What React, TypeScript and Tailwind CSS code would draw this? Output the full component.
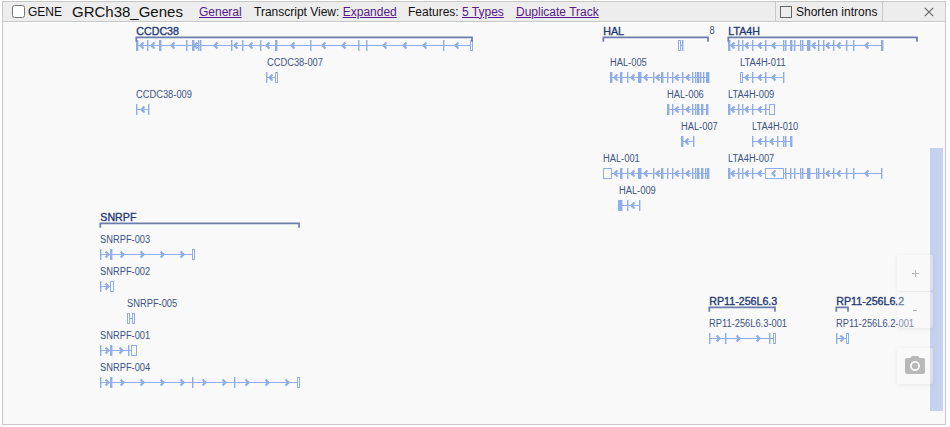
type Gene = { name: string; x: number; y: number; end: number };
type Transcript = {
  name?: string;
  labelX?: number;
  y: number;
  dir: 1 | -1;
  span: [number, number];
  exons: [number, number][];
  boxes?: [number, number][];
  arrows: number[];
};

const GENES: Gene[] = [
  { name: 'CCDC38', x: 136, y: 37, end: 472 },
  { name: 'HAL', x: 603, y: 37, end: 708 },
  { name: 'LTA4H', x: 728, y: 37, end: 917 },
  { name: 'SNRPF', x: 100, y: 223, end: 299 },
  { name: 'RP11-256L6.3', x: 709, y: 307, end: 775 },
  { name: 'RP11-256L6.2', x: 836, y: 307, end: 848 },
];

const TRANSCRIPTS: Transcript[] = [
  { y: 45, dir: -1, span: [136, 472], exons: [[136, 2], [147, 1], [159, 2], [186, 1], [192, 2], [198, 1], [200, 1], [231, 1], [242, 1], [260, 1], [275, 2], [310, 1], [358, 1], [366, 1], [443, 1]], boxes: [[470, 3]], arrows: [142, 153, 173, 196, 216, 236, 251, 268, 293, 324, 344, 385, 405, 425, 457] },
  { name: 'CCDC38-007', labelX: 267, y: 77, dir: -1, span: [267, 277], exons: [[266, 1]], boxes: [[275, 3]], arrows: [271] },
  { name: 'CCDC38-009', labelX: 136, y: 109, dir: -1, span: [136, 149], exons: [[136, 1], [148, 1]], arrows: [143] },
  { y: 45, dir: -1, span: [678, 683], exons: [[682, 1]], boxes: [[678, 3]], arrows: [] },
  { name: 'HAL-005', labelX: 610, y: 77, dir: -1, span: [610, 709], exons: [[610, 2], [620, 2], [627, 1], [638, 3], [653, 1], [661, 2], [667, 1], [672, 1], [682, 1], [692, 1], [695, 1], [697, 2], [700, 1], [703, 1], [706, 3]], arrows: [616, 633, 646, 658, 677, 688] },
  { name: 'HAL-006', labelX: 667, y: 109, dir: -1, span: [667, 707], exons: [[667, 2], [672, 1], [682, 1], [692, 1], [695, 1], [697, 2], [701, 2], [706, 2]], arrows: [677, 688] },
  { name: 'HAL-007', labelX: 681, y: 141, dir: -1, span: [682, 693], exons: [[681, 2], [693, 1]], arrows: [687] },
  { name: 'HAL-001', labelX: 603, y: 173, dir: -1, span: [611, 709], exons: [[620, 2], [627, 1], [638, 3], [653, 1], [661, 2], [667, 1], [672, 1], [682, 1], [692, 1], [695, 1], [697, 2], [701, 2], [705, 1], [707, 2]], boxes: [[603, 9]], arrows: [616, 633, 646, 658, 677, 688] },
  { name: 'HAL-009', labelX: 619, y: 205, dir: -1, span: [622, 640], exons: [[618, 4], [627, 1], [639, 1]], arrows: [633] },
  { y: 45, dir: -1, span: [728, 882], exons: [[728, 2], [738, 1], [742, 1], [752, 1], [765, 1], [783, 1], [785, 1], [790, 2], [794, 1], [800, 1], [802, 1], [807, 3], [818, 1], [823, 1], [833, 1], [846, 1], [853, 1], [881, 2]], arrows: [733, 747, 760, 774, 814, 828, 839, 867] },
  { name: 'LTA4H-011', labelX: 740, y: 77, dir: -1, span: [743, 783], exons: [[752, 1], [765, 1], [783, 1]], boxes: [[740, 3]], arrows: [747, 760, 774] },
  { name: 'LTA4H-009', labelX: 728, y: 109, dir: -1, span: [728, 769], exons: [[728, 2], [738, 1], [742, 1], [752, 1], [765, 1]], boxes: [[769, 6]], arrows: [733, 747, 760] },
  { name: 'LTA4H-010', labelX: 752, y: 141, dir: -1, span: [752, 792], exons: [[752, 1], [765, 1], [777, 1], [783, 1], [785, 1], [790, 2]], arrows: [760, 772] },
  { name: 'LTA4H-007', labelX: 728, y: 173, dir: -1, span: [728, 882], exons: [[728, 2], [738, 1], [742, 1], [752, 1], [785, 1], [790, 1], [794, 1], [800, 1], [802, 1], [807, 3], [816, 1], [818, 1], [823, 1], [833, 1], [846, 1], [853, 1], [881, 1]], boxes: [[765, 19]], arrows: [733, 747, 760, 774, 828, 839, 867] },
  { name: 'SNRPF-003', labelX: 100, y: 254, dir: 1, span: [101, 194], exons: [[100, 1], [110, 2]], boxes: [[192, 3]], arrows: [107, 122, 142, 162, 182] },
  { name: 'SNRPF-002', labelX: 100, y: 286, dir: 1, span: [101, 110], exons: [[100, 1]], boxes: [[110, 4]], arrows: [107] },
  { name: 'SNRPF-005', labelX: 127, y: 318, dir: 1, span: [128, 134], exons: [], boxes: [[127, 3], [132, 3]], arrows: [] },
  { name: 'SNRPF-001', labelX: 100, y: 350, dir: 1, span: [101, 131], exons: [[100, 1], [110, 2], [128, 1]], boxes: [[131, 6]], arrows: [107, 121] },
  { name: 'SNRPF-004', labelX: 100, y: 382, dir: 1, span: [101, 297], exons: [[100, 1], [110, 2], [192, 1], [234, 1]], boxes: [[297, 3]], arrows: [107, 122, 142, 162, 182, 204, 224, 247, 267, 287] },
  { name: 'RP11-256L6.3-001', labelX: 709, y: 338, dir: 1, span: [709, 773], exons: [[709, 1], [725, 1], [769, 1]], boxes: [[773, 3]], arrows: [718, 738, 758] },
  { name: 'RP11-256L6.2-001', labelX: 836, y: 338, dir: 1, span: [837, 846], exons: [[836, 1]], boxes: [[846, 3]], arrows: [842] },
];

function GeneBar({ gene }: { gene: Gene }) {
  const { x, y, end, name } = gene;
  return (
    <g>
      <path d={`M${x + 0.3} ${y + 4.8}V${y + 0.3}H${end}V${y + 4.8}`} fill="none" stroke="#6d7eaa" strokeWidth={1.7} />
      <text x={x + 0.3} y={y - 2} fill="#1f3a75" stroke="#1f3a75" strokeWidth={0.35} className="text-[10.67px]">{name}</text>
    </g>
  );
}

function TranscriptRow({ t }: { t: Transcript }) {
  const mid = t.y + 0.5;
  return (
    <g>
      {t.name && <text transform={`translate(${t.labelX} ${t.y - 11}) scale(.933 1)`} fill="#405384" className="text-[10px]">{t.name}</text>}
      <path d={`M${t.span[0]} ${mid}H${t.span[1]}`} stroke="#8fade8" strokeWidth={1} />
      {t.exons.map(([x, w], i) => (
        <rect key={i} x={x} y={t.y - 5} width={w + 0.4} height={11} fill="#8fade8" />
      ))}
      {(t.boxes ?? []).map(([x, w], i) => (
        <rect key={i} x={x + 0.5} y={t.y - 4.5} width={w - 1} height={10} fill="#fafafa" stroke="#8fade8" />
      ))}
      {t.arrows.map((x) => (
        <path key={x} d={`M${x - 1.5 * t.dir} ${mid - 3}L${x + 1.5 * t.dir} ${mid}L${x - 1.5 * t.dir} ${mid + 3}`} fill="none" stroke="#8fade8" strokeWidth={2.2} />
      ))}
    </g>
  );
}

function Link({ children }: { children: string }) {
  return <a href="#" className="text-[#551a8b] underline">{children}</a>;
}

const control = 'flex h-9 w-9 items-center justify-center rounded-[2px] bg-[#fafafa]/35 text-[#b8b8b8] shadow-[0_1px_4px_rgba(0,0,0,0.07)]';

export default function App() {
  return (
    <div className="h-[427px] w-[950px] overflow-hidden bg-white pl-[2px] pt-px font-['Liberation_Sans',Arial,sans-serif] text-[12px] text-[#111]">
      <div className="flex h-[424px] w-[944px] flex-col border border-[#c8c8c8]">
        <header className="flex h-5 shrink-0 items-center whitespace-nowrap border-b border-[#c8c8c8] bg-[#ededed] leading-5">
          <label className="ml-[9px] flex w-[60px] items-center gap-[3px]">
            <input type="checkbox" className="h-[13px] w-[13px] shrink-0" />
            GENE
          </label>
          <span className="w-[127px] pt-px text-[15px]">GRCh38_Genes</span>
          <span className="w-[55px]"><Link>General</Link></span>
          <span className="w-[154px]">Transcript View: <Link>Expanded</Link></span>
          <span className="w-[108px]">Features: <Link>5 Types</Link></span>
          <Link>Duplicate Track</Link>
          <label className="ml-auto flex h-full w-[108px] items-center gap-1 border-x border-[#c8c8c8] pl-1">
            <span className="h-3 w-3 border border-[#666]" />
            Shorten introns
          </label>
          <button aria-label="Close" className="flex h-full w-[62px] items-center justify-center pl-[30px]">
            <svg width="10" height="10" viewBox="0 0 10 10" stroke="#666" strokeWidth="1.2"><path d="M.8.8 9.2 9.2M9.2.8.8 9.2" /></svg>
          </button>
        </header>
        <main className="relative mt-px flex-1 bg-[#f9f9f9]">
          <svg width="942" height="401" viewBox="3 23 942 401" className="block">
            {TRANSCRIPTS.map((t, i) => <TranscriptRow key={i} t={t} />)}
            {GENES.map((g) => <GeneBar key={g.name} gene={g} />)}
            <text transform="translate(709.5 34) scale(.933 1)" fill="#405384" className="text-[10px]">8</text>
          </svg>
          <div className="absolute right-[2px] top-[125px] h-[263px] w-[13px] bg-[#c5d2ef]" />
          <div className="absolute right-3 top-[232px] flex flex-col gap-px">
            <button className={control}>
              <svg width="7" height="7" viewBox="0 0 7 7" stroke="currentColor"><path d="M3.5 0v7M0 3.5h7" /></svg>
            </button>
            <button className={control}>
              <svg width="4" height="3" viewBox="0 0 4 3" stroke="currentColor"><path d="M0 1.5h4" /></svg>
            </button>
            <button className={`${control} mt-[19px]`}>
              <svg width="24" height="24" viewBox="0 0 24 24" fill="currentColor">
                <circle cx="12" cy="12" r="3.2" />
                <path d="M9 2 7.17 4H4c-1.1 0-2 .9-2 2v12c0 1.1.9 2 2 2h16c1.1 0 2-.9 2-2V6c0-1.1-.9-2-2-2h-3.17L15 2H9zm3 15c-2.76 0-5-2.24-5-5s2.24-5 5-5 5 2.24 5 5-2.24 5-5 5z" />
              </svg>
            </button>
          </div>
        </main>
      </div>
    </div>
  );
}
